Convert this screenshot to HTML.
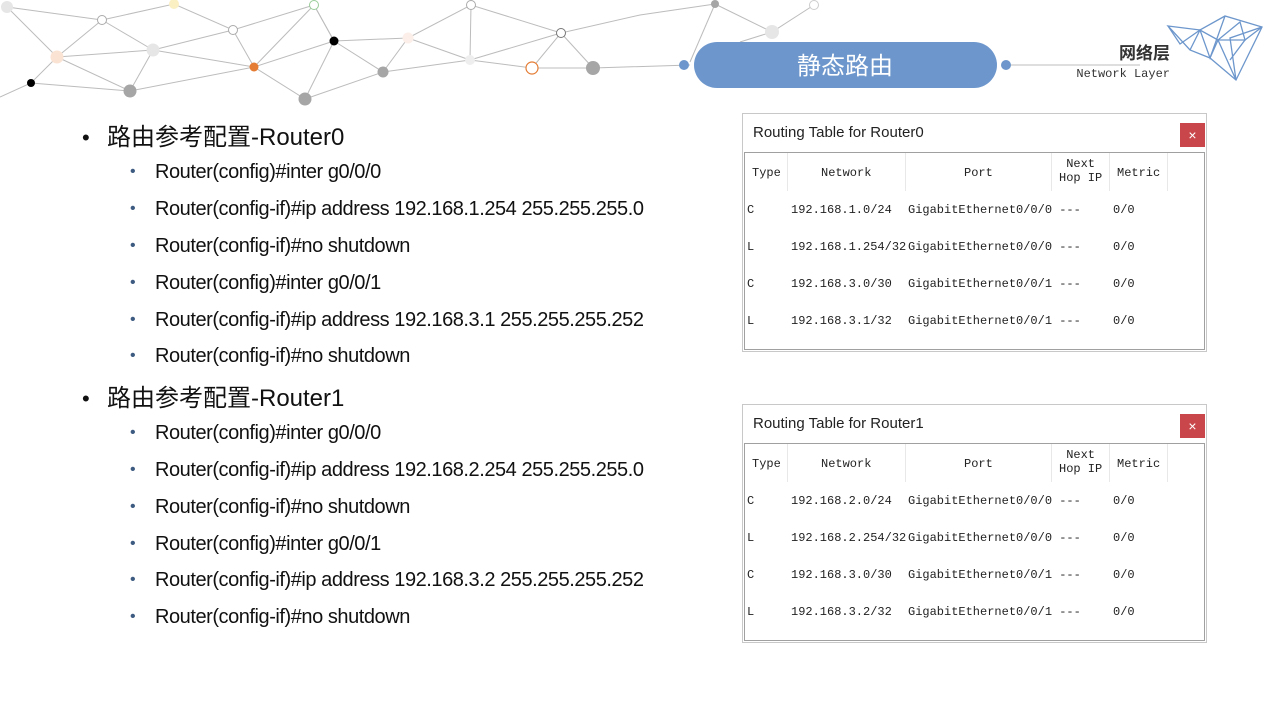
<!DOCTYPE html>
<html><head><meta charset="utf-8"><style>
*{margin:0;padding:0;box-sizing:border-box}
body{width:1280px;height:720px;background:#fff;position:relative;overflow:hidden;font-family:"Liberation Sans","Noto Sans CJK SC",sans-serif;color:#111}
.l1,.l2{position:absolute;white-space:nowrap}
.l1{left:82px;font-size:24px;}
.l1 b{font-weight:normal;display:inline-block;width:25px;font-size:22px}
.l2{left:130px;font-size:20px;letter-spacing:-0.45px}
.l2 b{font-weight:normal;display:inline-block;width:25px;color:#3d5a80;font-size:16px;vertical-align:2px}
.win{position:absolute;left:742px;width:465px;height:239px;border:1px solid #c8c8c8;background:#fff}
.ttl{position:absolute;left:10px;top:10px;font-size:15px;color:#222}
.x{position:absolute;right:1px;top:9px;width:25px;height:24px;background:#c9474a;color:#fff;font-size:14px;text-align:center;line-height:24px}
.tb{position:absolute;left:1px;top:38px;width:461px;height:198px;border:1px solid #a0a0a0;font-family:"Liberation Mono","Noto Serif CJK SC",monospace;font-size:12px;color:#222}
.tb span{position:absolute;white-space:nowrap}
.sep{position:absolute;top:0;width:1px;height:38px;background:#e8e8e8}
</style></head><body>
<svg width="1280" height="110" style="position:absolute;left:0;top:0" >
<g stroke="#bcbcbc" stroke-width="1" fill="none">
<polyline points="7,7 102,20 174,4 233,30 314,5 334,41 408,38 471,5 561,33 640,15 715,4"/>
<polyline points="7,7 57,57 153,50 254,67 334,41"/>
<polyline points="102,20 57,57 31,83 0,97"/>
<polyline points="102,20 153,50 130,91 31,83"/>
<polyline points="57,57 130,91 254,67 305,99 334,41 314,5 254,67 233,30"/>
<polyline points="153,50 233,30"/>
<polyline points="334,41 383,72 305,99"/>
<polyline points="383,72 408,38 470,60 471,5"/>
<polyline points="470,60 532,68 593,68 690,65"/>
<polyline points="383,72 470,60 561,33 532,68"/>
<polyline points="561,33 593,68"/>
<polyline points="715,4 772,32 814,5"/>
<polyline points="715,4 690,62"/>
<polyline points="772,32 740,42"/>
<line x1="1006" y1="65" x2="1140" y2="65"/>
</g>
<g>
<circle cx="7" cy="7" r="6" fill="#e6e6e6"/>
<circle cx="102" cy="20" r="4.5" fill="#fff" stroke="#aaa"/>
<circle cx="174" cy="4" r="5" fill="#fbefc4"/>
<circle cx="233" cy="30" r="4.5" fill="#fff" stroke="#aaa"/>
<circle cx="314" cy="5" r="4.5" fill="#fff" stroke="#9c9"/>
<circle cx="57" cy="57" r="6.5" fill="#fbe3d4"/>
<circle cx="153" cy="50" r="6.5" fill="#e6e6e6"/>
<circle cx="254" cy="67" r="4.5" fill="#e57c33"/>
<circle cx="334" cy="41" r="4.5" fill="#000"/>
<circle cx="408" cy="38" r="5.5" fill="#fcefe9"/>
<circle cx="383" cy="72" r="5.5" fill="#a6a6a6"/>
<circle cx="31" cy="83" r="4" fill="#000"/>
<circle cx="130" cy="91" r="6.5" fill="#a6a6a6"/>
<circle cx="305" cy="99" r="6.5" fill="#a6a6a6"/>
<circle cx="470" cy="60" r="5" fill="#eeeeee"/>
<circle cx="471" cy="5" r="4.5" fill="#fff" stroke="#aaa"/>
<circle cx="532" cy="68" r="6" fill="#fff" stroke="#e57c33" stroke-width="1.2"/>
<circle cx="561" cy="33" r="4.5" fill="#fff" stroke="#777"/>
<circle cx="593" cy="68" r="7" fill="#a6a6a6"/>
<circle cx="715" cy="4" r="4" fill="#a6a6a6"/>
<circle cx="814" cy="5" r="4.5" fill="#fff" stroke="#ccc"/>
<circle cx="772" cy="32" r="7" fill="#e6e6e6"/>
<circle cx="684" cy="65" r="5" fill="#6d97cc"/>
<circle cx="1006" cy="65" r="5" fill="#6d97cc"/>
</g>
<rect x="694" y="42" width="303" height="46" rx="23" fill="#6d97cc"/>
<text x="845" y="74" text-anchor="middle" fill="#fff" font-size="24" font-family="Noto Sans CJK SC,sans-serif">静态路由</text>
<text x="1170" y="59" text-anchor="end" fill="#333" font-size="17" font-weight="bold" font-family="Noto Sans CJK SC,sans-serif">网络层</text>
<text x="1170" y="77" text-anchor="end" fill="#333" font-size="12" font-family="Liberation Mono,monospace">Network Layer</text>
<g stroke="#6d97cc" stroke-width="1.3" fill="none">
<polygon points="1168,26 1200,30 1225,16 1262,27 1236,80 1210,58 1190,50"/>
<polyline points="1168,26 1180,44 1200,30 1210,58 1225,16"/>
<polyline points="1190,50 1200,30 1218,40 1236,80 1230,38 1262,27 1245,40 1230,60"/>
<polyline points="1218,40 1240,22 1245,40 1218,40 1210,58"/>
</g>
</svg>

<div class="l1" style="top:117px"><b>•</b>路由参考配置-Router0</div>
<div class="l2" style="top:161px"><b>•</b>Router(config)#inter g0/0/0</div>
<div class="l2" style="top:198px"><b>•</b>Router(config-if)#ip address 192.168.1.254 255.255.255.0</div>
<div class="l2" style="top:235px"><b>•</b>Router(config-if)#no shutdown</div>
<div class="l2" style="top:272px"><b>•</b>Router(config)#inter g0/0/1</div>
<div class="l2" style="top:309px"><b>•</b>Router(config-if)#ip address 192.168.3.1 255.255.255.252</div>
<div class="l2" style="top:345px"><b>•</b>Router(config-if)#no shutdown</div>
<div class="l1" style="top:378px"><b>•</b>路由参考配置-Router1</div>
<div class="l2" style="top:422px"><b>•</b>Router(config)#inter g0/0/0</div>
<div class="l2" style="top:459px"><b>•</b>Router(config-if)#ip address 192.168.2.254 255.255.255.0</div>
<div class="l2" style="top:496px"><b>•</b>Router(config-if)#no shutdown</div>
<div class="l2" style="top:533px"><b>•</b>Router(config)#inter g0/0/1</div>
<div class="l2" style="top:569px"><b>•</b>Router(config-if)#ip address 192.168.3.2 255.255.255.252</div>
<div class="l2" style="top:606px"><b>•</b>Router(config-if)#no shutdown</div>

<div class="win" style="top:113px">
<div class="ttl">Routing Table for Router0</div><div class="x">×</div>
<div class="tb">
<div class="sep" style="left:42px"></div><div class="sep" style="left:160px"></div><div class="sep" style="left:306px"></div><div class="sep" style="left:364px"></div><div class="sep" style="left:422px"></div>
<span style="left:7px;top:13px">Type</span><span style="left:76px;top:13px">Network</span><span style="left:219px;top:13px">Port</span><span style="left:314px;top:4px;line-height:14px;text-align:center">Next<br>Hop IP</span><span style="left:372px;top:13px">Metric</span>
<span style="left:2px;top:50px">C</span><span style="left:46px;top:50px">192.168.1.0/24</span><span style="left:163px;top:50px">GigabitEthernet0/0/0 ---</span><span style="left:368px;top:50px">0/0</span>
<span style="left:2px;top:87px">L</span><span style="left:46px;top:87px">192.168.1.254/32</span><span style="left:163px;top:87px">GigabitEthernet0/0/0 ---</span><span style="left:368px;top:87px">0/0</span>
<span style="left:2px;top:124px">C</span><span style="left:46px;top:124px">192.168.3.0/30</span><span style="left:163px;top:124px">GigabitEthernet0/0/1 ---</span><span style="left:368px;top:124px">0/0</span>
<span style="left:2px;top:161px">L</span><span style="left:46px;top:161px">192.168.3.1/32</span><span style="left:163px;top:161px">GigabitEthernet0/0/1 ---</span><span style="left:368px;top:161px">0/0</span>
</div></div>

<div class="win" style="top:404px">
<div class="ttl">Routing Table for Router1</div><div class="x">×</div>
<div class="tb">
<div class="sep" style="left:42px"></div><div class="sep" style="left:160px"></div><div class="sep" style="left:306px"></div><div class="sep" style="left:364px"></div><div class="sep" style="left:422px"></div>
<span style="left:7px;top:13px">Type</span><span style="left:76px;top:13px">Network</span><span style="left:219px;top:13px">Port</span><span style="left:314px;top:4px;line-height:14px;text-align:center">Next<br>Hop IP</span><span style="left:372px;top:13px">Metric</span>
<span style="left:2px;top:50px">C</span><span style="left:46px;top:50px">192.168.2.0/24</span><span style="left:163px;top:50px">GigabitEthernet0/0/0 ---</span><span style="left:368px;top:50px">0/0</span>
<span style="left:2px;top:87px">L</span><span style="left:46px;top:87px">192.168.2.254/32</span><span style="left:163px;top:87px">GigabitEthernet0/0/0 ---</span><span style="left:368px;top:87px">0/0</span>
<span style="left:2px;top:124px">C</span><span style="left:46px;top:124px">192.168.3.0/30</span><span style="left:163px;top:124px">GigabitEthernet0/0/1 ---</span><span style="left:368px;top:124px">0/0</span>
<span style="left:2px;top:161px">L</span><span style="left:46px;top:161px">192.168.3.2/32</span><span style="left:163px;top:161px">GigabitEthernet0/0/1 ---</span><span style="left:368px;top:161px">0/0</span>
</div></div>
</body></html>
